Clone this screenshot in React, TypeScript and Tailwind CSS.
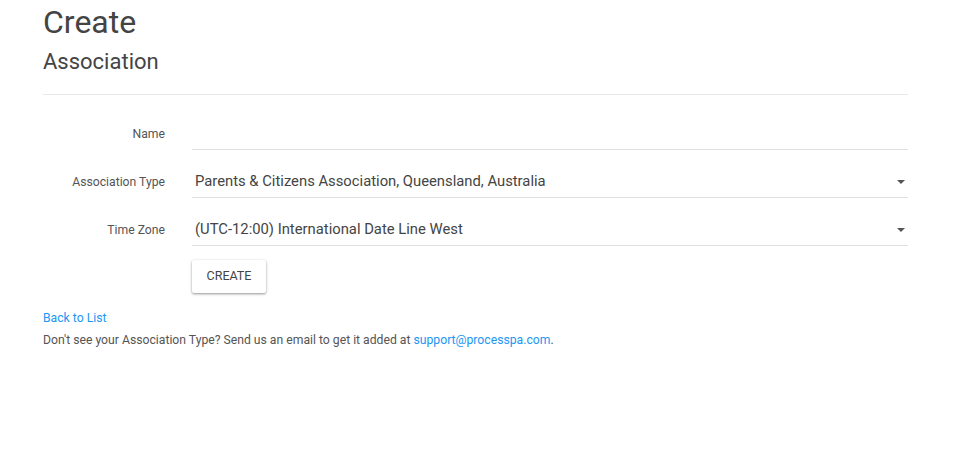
import React from "react";

const font = { fontFamily: "Roboto, 'Noto Sans', Arial, sans-serif" };

function Caret() {
  return (
    <svg width="8" height="4" viewBox="0 0 8 4" className="shrink-0">
      <path d="M0 0 L8 0 L4 4 Z" fill="#555" />
    </svg>
  );
}

function Row({ label, children }: { label: string; children: React.ReactNode }) {
  return (
    <div className="flex items-end h-[48px]">
      <div className="w-[122px] shrink-0 text-right text-[12.2px] text-[#555] pb-[7px]">{label}</div>
      <div className="ml-[27px] flex-1 h-[34px] border-b border-[#e0e0e0] flex items-center pt-[2px] pr-[3px]">
        {children}
      </div>
    </div>
  );
}

export default function App() {
  return (
    <div className="bg-white w-[953px] h-[476px] overflow-hidden" style={font}>
      <div className="ml-[43px] w-[865px]">
        <h1 className="text-[32px] leading-[38px] text-[#444] pt-[3px]">Create</h1>
        <h2 className="text-[22px] leading-[26px] text-[#444] mt-[8px]">Association</h2>
        <div className="mt-[19px] border-t border-[#e8e8e8]" />
        <div className="mt-[7px]">
          <Row label="Name">
            <span />
          </Row>
          <Row label="Association Type">
            <span className="flex-1 text-[14.8px] text-[#444] pl-[3px]">
              Parents &amp; Citizens Association, Queensland, Australia
            </span>
            <Caret />
          </Row>
          <Row label="Time Zone">
            <span className="flex-1 text-[14.8px] text-[#444] pl-[3px]">
              (UTC-12:00) International Date Line West
            </span>
            <Caret />
          </Row>
        </div>
        <div className="ml-[149px] mt-[14px]">
          <button className="h-[33px] w-[74px] bg-white text-[12.5px] text-[#444] rounded-[2px] shadow-[0_1px_3px_rgba(0,0,0,0.3),0_1px_2px_rgba(0,0,0,0.15)]">
            CREATE
          </button>
        </div>
        <div className="mt-[17px] text-[12.2px] leading-[16px]">
          <a className="text-[#2196f3]">Back to List</a>
        </div>
        <div className="mt-[6px] text-[12.2px] leading-[16px] text-[#555]">
          Don't see your Association Type? Send us an email to get it added at{" "}
          <a className="text-[#2196f3]">support@processpa.com</a>.
        </div>
      </div>
    </div>
  );
}
